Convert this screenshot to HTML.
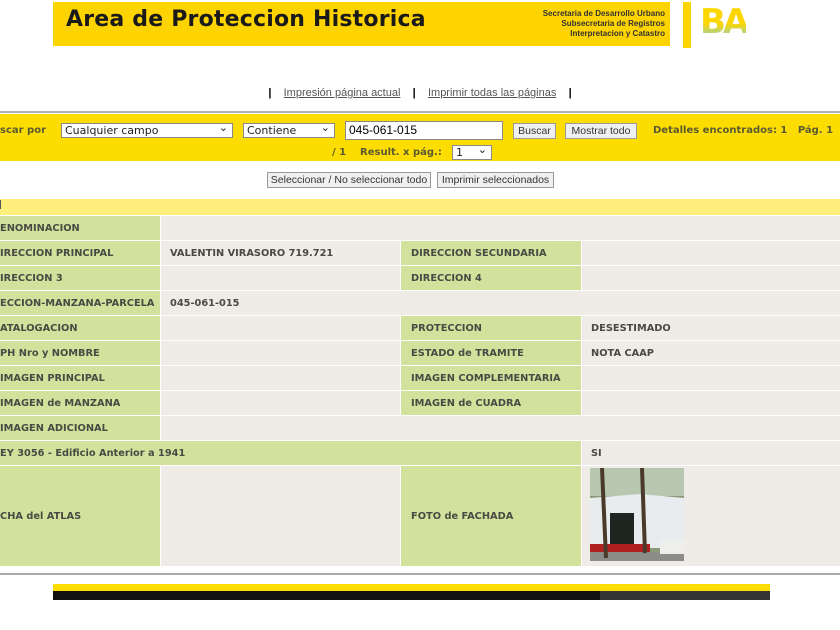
<!DOCTYPE html>
<html><head><meta charset="utf-8"><style>
*{margin:0;padding:0;box-sizing:border-box}
body{width:840px;height:630px;background:#fff;position:relative;overflow:hidden;font-family:"DejaVu Sans","Liberation Sans",sans-serif}
.a{position:absolute}
.c{position:absolute;font-size:9.8px;font-weight:bold;color:#4a4a44;line-height:26px;white-space:nowrap;overflow:hidden;padding-left:0}
.g{background:#d2e29c}.w{background:#efebe6}
.sel{position:absolute;background:#fff;border:1px solid #888;font-size:11px;font-family:"DejaVu Sans",sans-serif;color:#222;padding-left:3px;line-height:13px;height:15px}
.sel:after{content:"⌄";position:absolute;right:4px;top:-3px;font-size:11px}
.btn{position:absolute;background:#f0f0f0;border:1px solid #999;font-size:10.5px;font-family:"Liberation Sans",sans-serif;color:#333;text-align:center;line-height:14px;height:16px}
.y{font:bold 10px 'DejaVu Sans',sans-serif;color:#5a5a30;white-space:nowrap}
</style></head><body>
<div class="a" style="left:53px;top:2px;width:617px;height:44px;background:#fdd300"></div>
<div class="a" style="left:66px;top:7px;font:bold 22px 'DejaVu Sans',sans-serif;color:#1a1a1a;letter-spacing:0.2px">Area de Proteccion Historica</div>
<div class="a" style="left:500px;top:9px;width:165px;text-align:right;font:bold 8px 'Liberation Sans',sans-serif;color:#333;line-height:10px">Secretaria de Desarrollo Urbano<br>Subsecretaria de Registros<br>Interpretacion y Catastro</div>
<div class="a" style="left:683px;top:2px;width:8px;height:46px;background:#fdd300"></div>
<div class="a" style="left:700px;top:4px;font:bold 34px 'DejaVu Sans',sans-serif;line-height:36px;letter-spacing:-3px;background:linear-gradient(#fbd600 55%,#7fd0e0);-webkit-background-clip:text;color:transparent">BA</div>
<div class="a" style="left:0;top:87px;width:840px;text-align:center;font:11px 'Liberation Sans',sans-serif;color:#555">
<b style="color:#000">|</b>&nbsp;&nbsp;&nbsp;&nbsp;<u>Impresión página actual</u>&nbsp;&nbsp;&nbsp;&nbsp;<b style="color:#000">|</b>&nbsp;&nbsp;&nbsp;&nbsp;<u>Imprimir todas las páginas</u>&nbsp;&nbsp;&nbsp;&nbsp;<b style="color:#000">|</b></div>
<div class="a" style="left:0;top:111px;width:840px;height:2px;background:#b0b0b0"></div>
<div class="a" style="left:0;top:114px;width:840px;height:47px;background:#fddc00"></div>
<div class="a y" style="left:0;top:125px">scar por</div>
<div class="sel" style="left:61px;top:123px;width:172px">Cualquier campo</div>
<div class="sel" style="left:243px;top:123px;width:92px">Contiene</div>
<div class="a" style="left:345px;top:121px;width:158px;height:19px;background:#fff;border:1px solid #888;font:12px 'Liberation Sans',sans-serif;padding-left:3px;line-height:17px">045-061-015</div>
<div class="btn" style="left:513px;top:123px;width:43px">Buscar</div>
<div class="btn" style="left:565px;top:123px;width:72px">Mostrar todo</div>
<div class="a y" style="left:653px;top:125px">Detalles encontrados: 1&nbsp;&nbsp;&nbsp;Pág. 1</div>
<div class="a y" style="left:332px;top:147px">/ 1&nbsp;&nbsp;&nbsp;&nbsp;Result. x pág.:</div>
<div class="sel" style="left:452px;top:145px;width:40px">1</div>
<div class="btn" style="left:267px;top:172px;width:164px">Seleccionar / No seleccionar todo</div>
<div class="btn" style="left:437px;top:172px;width:117px">Imprimir seleccionados</div>
<div class="a" style="left:0;top:199px;width:840px;height:16px;background:#fff07e"></div>
<div class="a" style="left:0;top:200px;width:1px;height:9px;background:#555"></div>

<div class="c g" style="left:0;top:216px;width:160px;height:24px">ENOMINACION</div>
<div class="c w" style="left:161px;top:216px;width:679px;height:24px"></div>

<div class="c g" style="left:0;top:241px;width:160px;height:24px">IRECCION PRINCIPAL</div>
<div class="c w" style="left:161px;top:241px;width:239px;height:24px;padding-left:9px">VALENTIN VIRASORO 719.721</div>
<div class="c g" style="left:401px;top:241px;width:180px;height:24px;padding-left:10px">DIRECCION SECUNDARIA</div>
<div class="c w" style="left:582px;top:241px;width:258px;height:24px"></div>

<div class="c g" style="left:0;top:266px;width:160px;height:24px">IRECCION 3</div>
<div class="c w" style="left:161px;top:266px;width:239px;height:24px"></div>
<div class="c g" style="left:401px;top:266px;width:180px;height:24px;padding-left:10px">DIRECCION 4</div>
<div class="c w" style="left:582px;top:266px;width:258px;height:24px"></div>

<div class="c g" style="left:0;top:291px;width:160px;height:24px">ECCION-MANZANA-PARCELA</div>
<div class="c w" style="left:161px;top:291px;width:679px;height:24px;padding-left:9px">045-061-015</div>

<div class="c g" style="left:0;top:316px;width:160px;height:24px">ATALOGACION</div>
<div class="c w" style="left:161px;top:316px;width:239px;height:24px"></div>
<div class="c g" style="left:401px;top:316px;width:180px;height:24px;padding-left:10px">PROTECCION</div>
<div class="c w" style="left:582px;top:316px;width:258px;height:24px;padding-left:9px">DESESTIMADO</div>

<div class="c g" style="left:0;top:341px;width:160px;height:24px">PH Nro y NOMBRE</div>
<div class="c w" style="left:161px;top:341px;width:239px;height:24px"></div>
<div class="c g" style="left:401px;top:341px;width:180px;height:24px;padding-left:10px">ESTADO de TRAMITE</div>
<div class="c w" style="left:582px;top:341px;width:258px;height:24px;padding-left:9px">NOTA CAAP</div>

<div class="c g" style="left:0;top:366px;width:160px;height:24px">IMAGEN PRINCIPAL</div>
<div class="c w" style="left:161px;top:366px;width:239px;height:24px"></div>
<div class="c g" style="left:401px;top:366px;width:180px;height:24px;padding-left:10px">IMAGEN COMPLEMENTARIA</div>
<div class="c w" style="left:582px;top:366px;width:258px;height:24px"></div>

<div class="c g" style="left:0;top:391px;width:160px;height:24px">IMAGEN de MANZANA</div>
<div class="c w" style="left:161px;top:391px;width:239px;height:24px"></div>
<div class="c g" style="left:401px;top:391px;width:180px;height:24px;padding-left:10px">IMAGEN de CUADRA</div>
<div class="c w" style="left:582px;top:391px;width:258px;height:24px"></div>

<div class="c g" style="left:0;top:416px;width:160px;height:24px">IMAGEN ADICIONAL</div>
<div class="c w" style="left:161px;top:416px;width:679px;height:24px"></div>

<div class="c g" style="left:0;top:441px;width:581px;height:24px">EY 3056 - Edificio Anterior a 1941</div>
<div class="c w" style="left:582px;top:441px;width:258px;height:24px;padding-left:9px">SI</div>

<div class="c g" style="left:0;top:466px;width:160px;height:100px;line-height:101px">CHA del ATLAS</div>
<div class="c w" style="left:161px;top:466px;width:239px;height:100px"></div>
<div class="c g" style="left:401px;top:466px;width:180px;height:100px;line-height:101px;padding-left:10px">FOTO de FACHADA</div>
<div class="c w" style="left:582px;top:466px;width:258px;height:100px"></div>
<svg class="a" style="left:590px;top:468px" width="94" height="93" viewBox="0 0 94 93">
<rect width="94" height="93" fill="#8a9a78"/>
<rect x="0" y="0" width="94" height="28" fill="#b8c8b0"/>
<path d="M0 30 L50 26 L94 30 L94 80 L0 80Z" fill="#e8ecef"/>
<rect x="20" y="45" width="24" height="35" fill="#1e2420"/>
<rect x="0" y="76" width="60" height="8" fill="#b02020"/>
<rect x="0" y="84" width="94" height="9" fill="#8c8c88"/>
<rect x="70" y="72" width="24" height="14" fill="#eeeeea"/>
<path d="M12 0 L16 90 M52 0 L55 85" stroke="#4a3a2a" stroke-width="4"/>
</svg>
<div class="a" style="left:0;top:573px;width:840px;height:2px;background:#aaa"></div>
<div class="a" style="left:53px;top:584px;width:717px;height:7px;background:#fddc00"></div>
<div class="a" style="left:53px;top:591px;width:717px;height:9px;background:#111"></div>
<div class="a" style="left:600px;top:591px;width:170px;height:9px;background:#333"></div>
</body></html>
